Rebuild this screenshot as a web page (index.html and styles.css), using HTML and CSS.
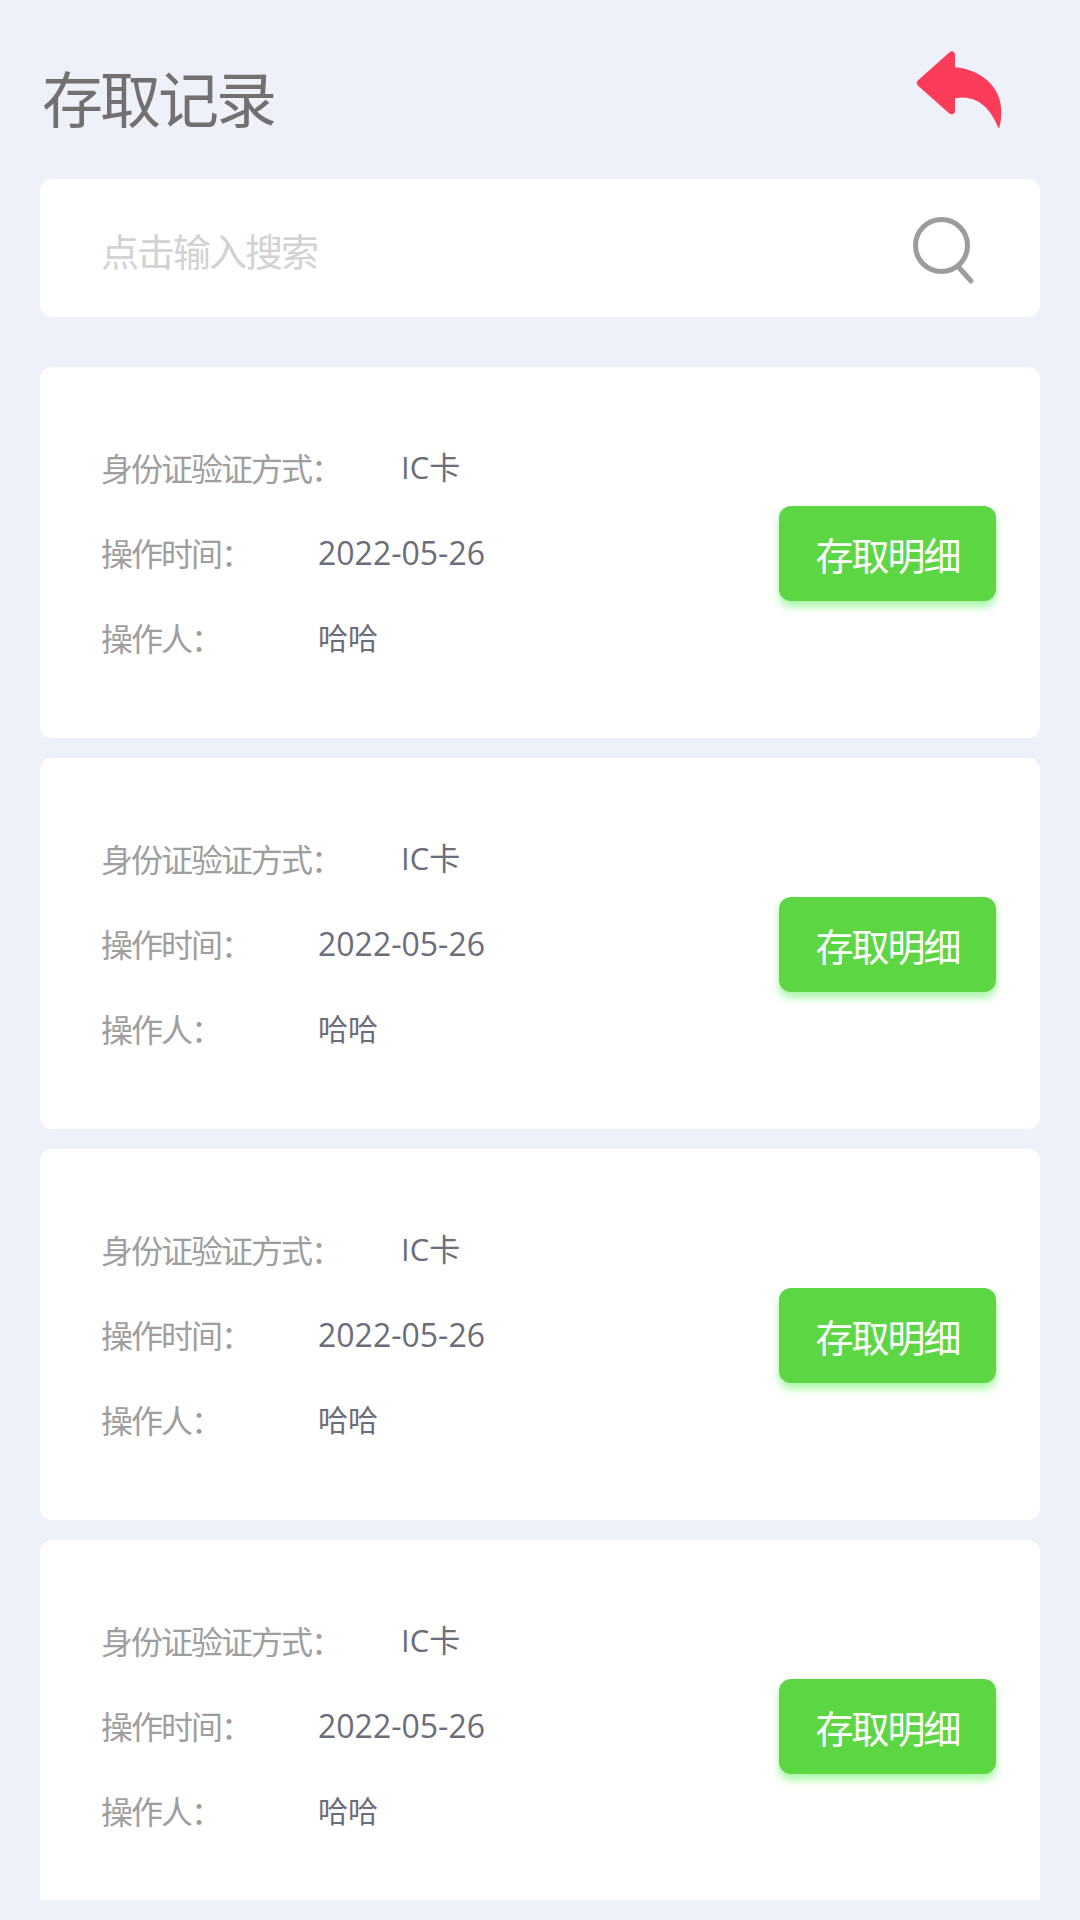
FILE: index.html
```html
<!DOCTYPE html>
<html lang="zh-CN">
<head>
  <meta charset="UTF-8">
  <title>存取记录</title>
  <link rel="stylesheet" href="styles.css">
</head>
<body>

<header class="header">
  <h1>存取记录</h1>
  <svg class="back" width="90" height="80" viewBox="0 0 90 80">
    <path d="M1.800 29.500 L33.500 1.300 C35.500 -0.500 39 0 39 4 V16.300 C66 18.500 85.300 37 85.300 60 C85.300 68 84.500 73 83.200 76.500 Q82.700 77.500 82.200 76.500 C75 59 62 43 39 47.300 V59.500 C39 63.500 35.500 64.300 33 62.300 L1.800 34.500 C0.300 33 0.300 31 1.800 29.500 Z" fill="#fc3d5a"/>
  </svg>
</header>

<!-- Search -->
<div class="search">
  <input type="text" placeholder="点击输入搜索">
  <svg class="search-icon" width="64" height="70" viewBox="0 0 64 70">
    <circle cx="29.500" cy="29.500" r="26" fill="none" stroke="#9c9c9c" stroke-width="5"/>
    <path d="M46.500 51 L59 65" stroke="#9c9c9c" stroke-width="5" stroke-linecap="round"/>
  </svg>
</div>

<!-- Record list -->
<div class="list" id="list"></div>

<script>
  const records = [
    { type: 'IC卡', date: '2022-05-26', name: '哈哈' },
    { type: 'IC卡', date: '2022-05-26', name: '哈哈' },
    { type: 'IC卡', date: '2022-05-26', name: '哈哈' },
    { type: 'IC卡', date: '2022-05-26', name: '哈哈' }
  ];

  const list = document.getElementById('list');
  records.forEach(r => {
    list.innerHTML += `
      <div class="card">
        <div class="info">
          <div class="row row-wide">
            <span class="label">身份证验证方式：</span>
            <span class="value">${r.type}</span>
          </div>
          <div class="row">
            <span class="label">操作时间：</span>
            <span class="value date">${r.date}</span>
          </div>
          <div class="row">
            <span class="label">操作人：</span>
            <span class="value">${r.name}</span>
          </div>
        </div>
        <button class="detail">存取明细</button>
      </div>`;
  });
</script>

</body>
</html>
```

FILE: styles.css
```css
* {
  box-sizing: border-box;
}

body {
  font-family: "Open Sans", "Noto Sans CJK SC", sans-serif;
  margin: 0;
  height: 1920px;
  padding: 0 40px 20px;
  background: #eef1f9;
  display: flex;
  flex-direction: column;
  overflow: hidden;
}

.header {
  display: flex;
  justify-content: space-between;
  height: 179px;
  padding: 51px 34px 0 2px;
  flex-shrink: 0;
}

h1 {
  margin: 0;
  height: 98px;
  line-height: 98px;
  font-size: 61px;
  font-weight: 400;
  letter-spacing: -3px;
  color: #717171;
}

.search {
  display: flex;
  align-items: center;
  justify-content: space-between;
  height: 138px;
  padding: 0 64px 0 61px;
  margin-bottom: 50px;
  background: #fff;
  border-radius: 12px;
  flex-shrink: 0;
}

.search input {
  width: 600px;
  height: 80px;
  padding: 6px 0 0;
  border: none;
  outline: none;
  font-family: inherit;
  font-size: 38px;
  letter-spacing: -2px;
}

.search input::placeholder {
  color: #d2d2d2;
}

.search-icon {
  margin-top: 6px;
}

.list {
  display: flex;
  flex-direction: column;
  gap: 20px;
  flex: 1;
  min-height: 0;
  overflow: hidden;
}

.card {
  display: flex;
  align-items: center;
  justify-content: space-between;
  height: 371px;
  padding: 2px 44px 0 61px;
  background: #fff;
  border-radius: 12px;
  flex-shrink: 0;
}

.row {
  display: flex;
  height: 85px;
  line-height: 83px;
}

.label {
  width: 217px;
  line-height: 86px;
  font-size: 32px;
  letter-spacing: -2px;
  color: #9e9e9e;
}

.row-wide .label {
  width: 300px;
}

.value {
  font-size: 30px;
  color: #6b6d7a;
}

.row-wide .value {
  font-size: 31px;
}

.date {
  font-size: 32px;
}

.detail {
  width: 217px;
  height: 95px;
  padding: 0;
  border: none;
  border-radius: 12px;
  background: #5cd743;
  box-shadow: 0 6px 8px #a8f7a8;
  color: #fff;
  font-family: inherit;
  font-size: 38px;
  letter-spacing: -2px;
}
```
